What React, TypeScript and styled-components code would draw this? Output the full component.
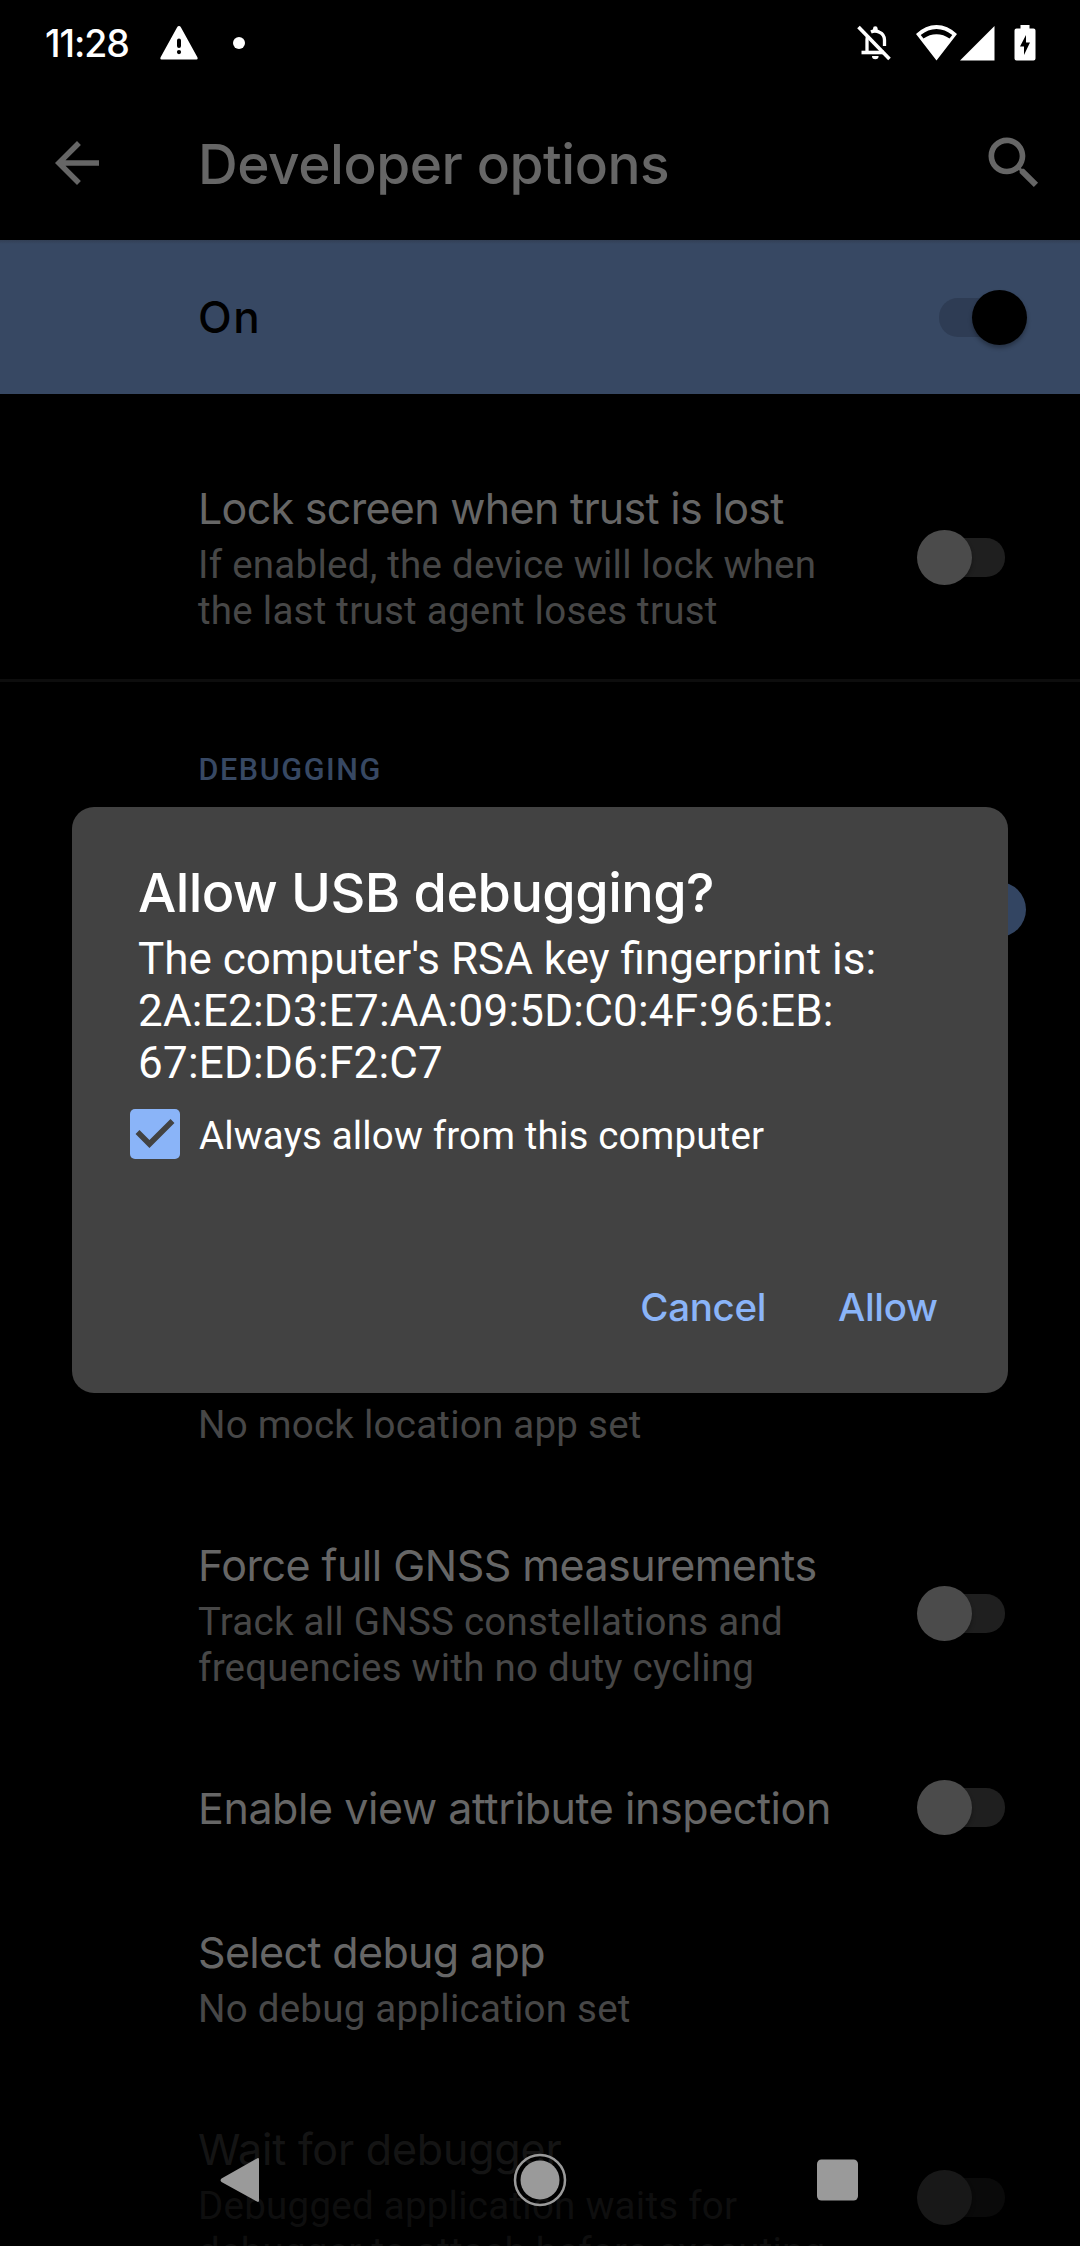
import React from "react";
import styled, { createGlobalStyle } from "styled-components";

const display = `Inter, "Open Sans", Roboto, sans-serif`;
const body = `Roboto, "Liberation Sans", sans-serif`;

const GlobalStyle = createGlobalStyle`
  * { box-sizing: border-box; }
  html, body { margin: 0; padding: 0; background: #000; }
`;

const Screen = styled.div`
  position: relative;
  width: 1080px;
  height: 2246px;
  overflow: hidden;
  display: flex;
  flex-direction: column;
  background: #000;
  font-family: ${body};
`;

const StatusBar = styled.header`
  flex: none;
  height: 86px;
  padding: 0 44px 0 45px;
  display: flex;
  align-items: center;
  color: #fff;
`;

const Clock = styled.time`
  width: 84px;
  padding-top: 2px;
  font: 500 37.5px/44px ${display};
  letter-spacing: -1.1px;
  white-space: nowrap;
`;

const StatusIcons = styled.div`
  display: flex;
  align-items: center;
  flex: 1;
  svg { display: block; }
`;

const WarningSlot = styled.span`margin: 0 35px 0 30.5px;`;
const Dot = styled.span`
  width: 12px;
  height: 12px;
  border-radius: 50%;
  background: #fff;
`;
const Gap = styled.span<{ $width?: number }>`
  flex: ${(p) => (p.$width ? `0 0 ${p.$width}px` : "1")};
`;

const AppBar = styled.div`
  flex: none;
  height: 154px;
  padding: 0 32px 0 44px;
  display: flex;
  align-items: center;
  color: #666;
  svg { display: block; fill: currentColor; }
`;

const AppTitle = styled.h1`
  flex: 1;
  margin: 0 0 0 88px;
  padding-top: 1px;
  font: 500 55px/64px ${display};
  letter-spacing: -0.45px;
  white-space: nowrap;
`;

const MasterBar = styled.section`
  flex: none;
  height: 154px;
  padding: 0 53.5px 0 198px;
  display: flex;
  align-items: center;
  justify-content: space-between;
  background: linear-gradient(#323f55 0, #374863 4px);
`;

const MasterLabel = styled.span`
  font: 500 44px/56px ${display};
  letter-spacing: 1.6px;
  color: #000;
`;

const Toggle = styled.span<{ $on?: boolean; $dim?: boolean; $track: string; $thumb: string }>`
  flex: none;
  display: flex;
  align-items: center;
  width: 87.5px;
  height: 56px;
  opacity: ${(p) => (p.$dim ? 0.32 : 1)};
  &::before {
    content: "";
    order: ${(p) => (p.$on ? 0 : 1)};
    width: 61px;
    height: 39px;
    border-radius: ${(p) => (p.$on ? "19px 0 0 19px" : "0 19px 19px 0")};
    background: ${(p) => p.$track};
    ${(p) => (p.$on ? "margin-right: -28.5px;" : "margin-left: -28.5px;")}
  }
  &::after {
    content: "";
    z-index: 1;
    width: 55px;
    height: 55px;
    border-radius: 50%;
    background: ${(p) => p.$thumb};
    box-shadow: 0 3px 4px rgba(0, 0, 0, 0.3);
  }
`;

const List = styled.main`
  flex: none;
  padding-top: 42px;
  isolation: isolate;
`;

const Row = styled.div<{ $height: number; $on?: boolean }>`
  height: ${(p) => p.$height}px;
  padding-left: 198px;
  padding-right: ${(p) => (p.$on ? 54 : 75.5)}px;
  display: flex;
  align-items: center;
  justify-content: space-between;
`;

const RowText = styled.div<{ $dim?: boolean }>`
  flex: 1;
  opacity: ${(p) => (p.$dim ? 0.2 : 1)};
`;

const RowTitle = styled.div<{ $spacing: number }>`
  font: 400 43px/56px ${display};
  letter-spacing: ${(p) => p.$spacing}px;
  color: #666;
  white-space: nowrap;
`;

const RowSummary = styled.div`
  padding-top: 6px;
  font: 400 38.5px/46px ${body};
  letter-spacing: 0.25px;
  color: #474747;
  white-space: pre;
`;

const Divider = styled.hr`
  height: 3px;
  margin: 1px 0 0;
  border: 0;
  background: #0d0d0d;
`;

const SectionHeader = styled.h2`
  height: 129px;
  margin: 0;
  padding: 70px 0 0 198.5px;
  font: 500 30.5px/36px ${body};
  letter-spacing: 1.6px;
  color: #374863;
`;

const HiddenGap = styled.div`height: 289px;`;

const Dialog = styled.section`
  position: absolute;
  left: 72px;
  top: 807px;
  width: 936px;
  height: 586px;
  padding: 54px 66px 0;
  border-radius: 22px;
  background: #424242;
  color: #fff;
`;

const DialogTitle = styled.h2`
  margin: 0;
  font: 500 54px/64px ${display};
  letter-spacing: -0.55px;
  white-space: nowrap;
`;

const Message = styled.p`
  margin: 8px 0 0;
  font: 400 44px/52px ${body};
  white-space: pre;
`;

const Fingerprint = styled.span`
  letter-spacing: 0.22px;
`;

const CheckRow = styled.label`
  display: flex;
  align-items: center;
  gap: 19px;
  margin: 20px 0 0 -8px;
  height: 50px;
`;

const CheckLabel = styled.span`
  padding-top: 3px;
  font: 400 38.5px/50px ${body};
  letter-spacing: 0.15px;
`;

const CheckBox = styled.span`
  width: 50px;
  height: 50px;
  border-radius: 5px;
  background: #8ab4f8;
  svg { display: block; fill: #424242; }
`;

const Actions = styled.div`
  display: flex;
  justify-content: flex-end;
  gap: 72px;
  margin-top: 124px;
  padding-right: 4.5px;
`;

const Action = styled.button`
  padding: 0;
  border: 0;
  background: none;
  font: 500 38.5px/48px ${display};
  letter-spacing: -0.35px;
  color: #8ab4f8;
`;

const NavBar = styled.nav`
  position: absolute;
  left: 0;
  bottom: 0;
  width: 1080px;
  height: 132px;
  padding: 0 216px;
  display: flex;
  align-items: center;
  justify-content: space-between;
  svg { display: block; }
`;

const Switch = ({ on = false, dim = false }: { on?: boolean; dim?: boolean }) => (
  <Toggle $on={on} $dim={dim} $track={on ? "#141c27" : "#1f1f1f"} $thumb={on ? "#334562" : "#4b4b4b"} />
);

type PrefProps = {
  title: string;
  spacing: number;
  summary?: string;
  height: number;
  toggle?: boolean;
  dim?: boolean;
};

const Preference = ({ title, spacing, summary, height, toggle, dim }: PrefProps) => (
  <Row $height={height}>
    <RowText $dim={dim}>
      <RowTitle $spacing={spacing}>{title}</RowTitle>
      {summary && <RowSummary>{summary}</RowSummary>}
    </RowText>
    {toggle && <Switch dim={dim} />}
  </Row>
);

const Warning = () => (
  <svg width="38" height="34" viewBox="0 0 38 34">
    <path fill="#fff" fillRule="evenodd" d="M19 0q1.200 0 2 1.400L37.400 31.200Q38.200 33.500 36.500 33.500H1.500Q-.2 33.500.6 31.200L17 1.400Q17.800 0 19 0ZM17 14.500V20a2 2 0 0 0 4 0V14.500a2 2 0 0 0-4 0ZM19 24a2.100 2.100 0 1 0 0 4.200a2.100 2.100 0 0 0 0-4.200Z" />
  </svg>
);

const BellOff = () => (
  <svg width="34" height="36" viewBox="0 0 34 36" fill="none" stroke="#fff" strokeWidth="3.300">
    <path d="M1.500 2L32.500 34" strokeWidth="3.600" />
    <path d="M4.500 27.500H27" strokeWidth="3.600" />
    <path d="M10 26V14.500Q10 12.500 11 10.500" />
    <path d="M14 6.900Q18 5 22.500 7.200Q27.500 9.500 27.500 15V21" />
    <path d="M16 6V3.500a2.300 2.300 0 0 1 4.600 0V6Z" fill="#fff" stroke="none" />
    <path d="M15 31h6.600a3.300 3.300 0 0 1-6.600 0Z" fill="#fff" stroke="none" />
  </svg>
);

const Wifi = () => (
  <svg width="41" height="36" viewBox="0 0 41 36">
    <path fill="#fff" fillRule="evenodd" d="M20.500 0Q31.500 0 41 9L20.500 35.500L0 9Q9.500 0 20.500 0ZM4.700 10L7.500 13.500Q13.500 9.200 20.500 9.200Q27.500 9.200 33.500 13.500L36.300 10Q29 4 20.500 4Q12 4 4.700 10Z" />
  </svg>
);

const Signal = () => (
  <svg width="35" height="35" viewBox="0 0 35 35"><path fill="#fff" d="M34.500 0V34.500H0Z" /></svg>
);

const Battery = () => (
  <svg width="22" height="36" viewBox="0 0 22 36">
    <path fill="#fff" fillRule="evenodd" d="M6.500 0h9v3.500H19.500Q21.500 3.500 21.500 5.500V33.500Q21.500 35.500 19.500 35.500H2.500Q.5 35.500.5 33.500V5.500Q.5 3.500 2.500 3.500H6.500ZM12 10L6 21.500H10V30L16 17.500H12Z" />
  </svg>
);

export default function App() {
  return (
    <>
      <GlobalStyle />
      <Screen>
        <StatusBar>
          <Clock>11:28</Clock>
          <StatusIcons>
            <WarningSlot><Warning /></WarningSlot>
            <Dot />
            <Gap />
            <BellOff />
            <Gap $width={25} />
            <Wifi />
            <Gap $width={3} />
            <Signal />
            <Gap $width={19} />
            <Battery />
          </StatusIcons>
        </StatusBar>
        <AppBar>
          <svg width="66" height="66" viewBox="0 0 24 24"><path d="M20 11H7.830l5.590-5.590L12 4l-8 8 8 8 1.410-1.410L7.830 13H20v-2z" /></svg>
          <AppTitle>Developer options</AppTitle>
          <svg width="68" height="68" viewBox="0 0 24 24"><path d="M15.500 14h-.79l-.28-.27C15.410 12.590 16 11.110 16 9.500 16 5.910 13.090 3 9.500 3S3 5.910 3 9.500 5.910 16 9.500 16c1.610 0 3.090-.59 4.230-1.570l.27.28v.79l5 4.990L20.490 19l-4.990-5zm-6 0C7.010 14 5 11.990 5 9.500S7.010 5 9.500 5 14 7.010 14 9.500 11.990 14 9.500 14z" /></svg>
        </AppBar>
        <MasterBar>
          <MasterLabel>On</MasterLabel>
          <Toggle $on $track="#2e3c54" $thumb="#000" />
        </MasterBar>
        <List>
          <Preference title="Lock screen when trust is lost" spacing={-0.7} summary={"If enabled, the device will lock when\nthe last trust agent loses trust"} height={242} toggle />
          <Divider />
          <SectionHeader>DEBUGGING</SectionHeader>
          <Row $height={196} $on><RowText /><Switch on /></Row>
          <HiddenGap />
          <Preference title="Select mock location app" spacing={-0.8} summary="No mock location app set" height={196} />
          <Preference title="Force full GNSS measurements" spacing={-0.52} summary={"Track all GNSS constellations and\nfrequencies with no duty cycling"} height={243} toggle />
          <Preference title="Enable view attribute inspection" spacing={-0.43} height={145} toggle />
          <Preference title="Select debug app" spacing={-0.65} summary="No debug application set" height={196} />
          <Preference title="Wait for debugger" spacing={-0.2} summary={"Debugged application waits for\ndebugger to attach before executing"} height={243} toggle dim />
        </List>
        <Dialog>
          <DialogTitle>Allow USB debugging?</DialogTitle>
          <Message>
            {"The computer's RSA key fingerprint is:\n"}
            <Fingerprint>{"2A:E2:D3:E7:AA:09:5D:C0:4F:96:EB:\n67:ED:D6:F2:C7"}</Fingerprint>
          </Message>
          <CheckRow>
            <CheckBox>
              <svg width="50" height="50" viewBox="3 3 18 18"><path d="M10 17l-5-5 1.410-1.410L10 14.170l7.590-7.590L19 8l-9 9z" /></svg>
            </CheckBox>
            <CheckLabel>Always allow from this computer</CheckLabel>
          </CheckRow>
          <Actions>
            <Action>Cancel</Action>
            <Action>Allow</Action>
          </Actions>
        </Dialog>
        <NavBar>
          <svg width="54" height="48" viewBox="0 0 54 48"><path d="M43 3.500V44.500Q43 47 40.500 45.300L5.500 26Q3.500 24.300 5.500 22.500L40.500 2.700Q43 1 43 3.500Z" fill="#9a9a9a" /></svg>
          <svg width="54" height="54" viewBox="0 0 54 54"><circle cx="27" cy="27" r="25" fill="none" stroke="#9a9a9a" strokeWidth="2.500" /><circle cx="27" cy="27" r="19.500" fill="#9a9a9a" /></svg>
          <svg width="54" height="54" viewBox="0 0 54 54"><rect x="7" y="6.500" width="41" height="41" rx="4.500" fill="#9a9a9a" /></svg>
        </NavBar>
      </Screen>
    </>
  );
}
